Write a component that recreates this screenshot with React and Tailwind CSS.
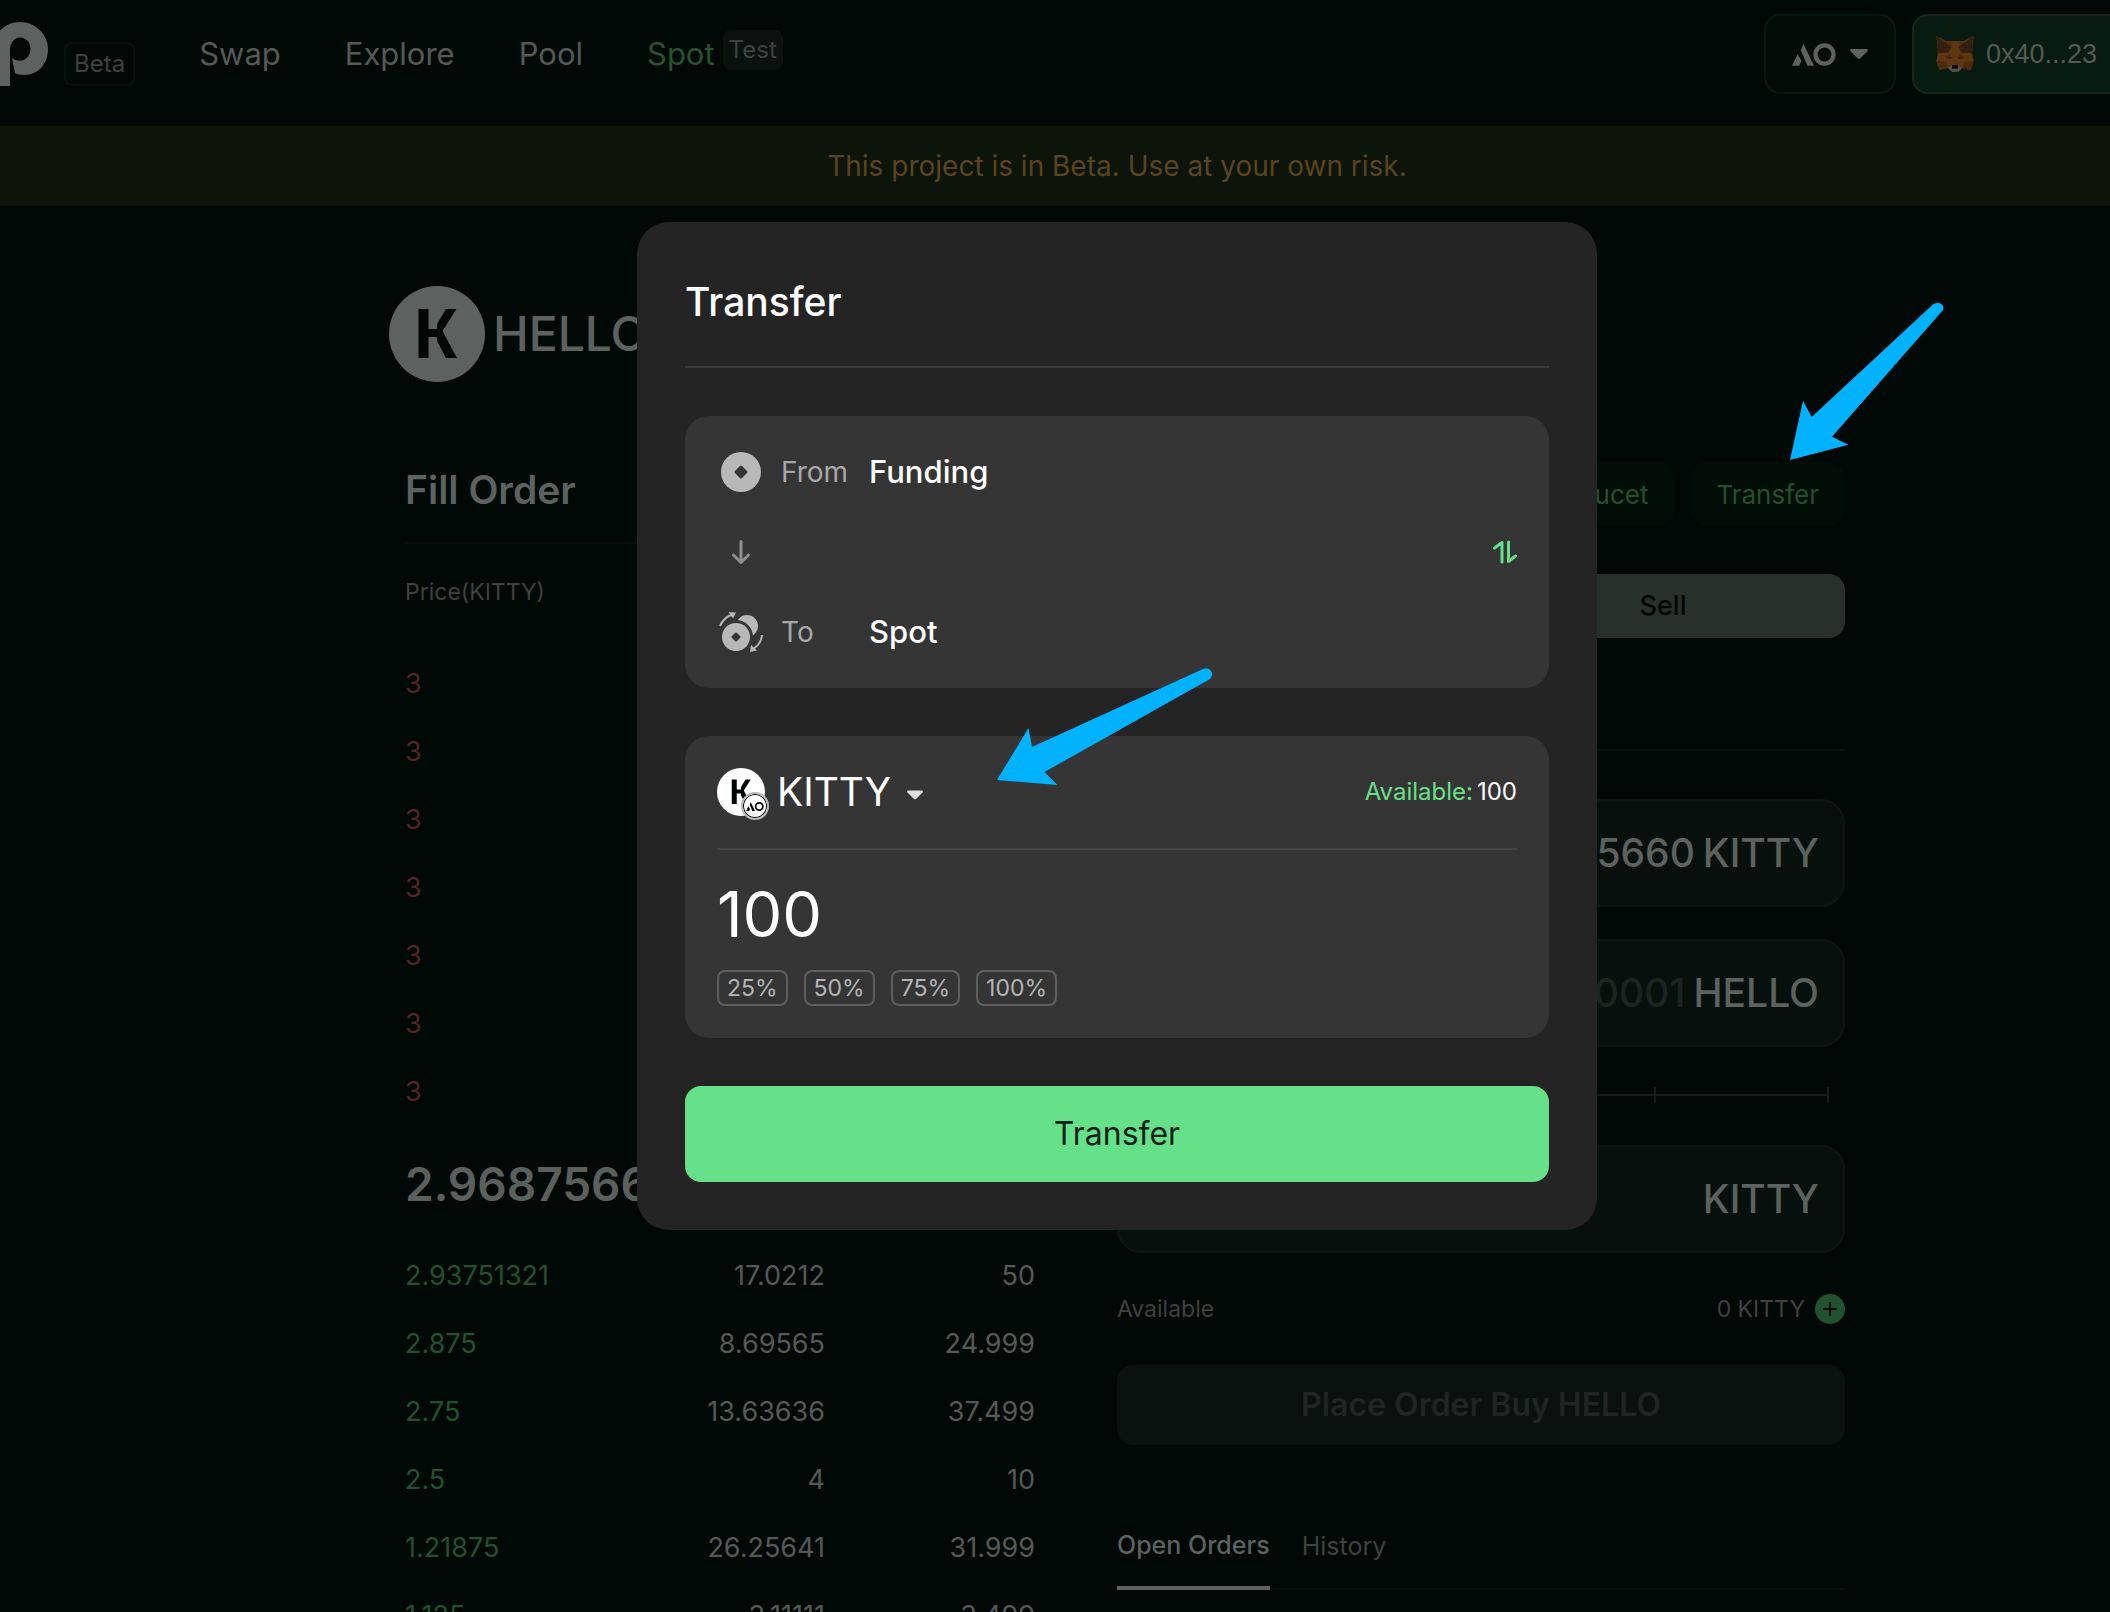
import React, { useState } from "react";

const asks = ["3", "3", "3", "3", "3", "3", "3"];
const bids = [
  ["2.93751321", "17.0212", "50"],
  ["2.875", "8.69565", "24.999"],
  ["2.75", "13.63636", "37.499"],
  ["2.5", "4", "10"],
  ["1.21875", "26.25641", "31.999"],
  ["1.125", "3.11111", "3.499"],
];

function AoMark({ className }) {
  return (
    <svg className={className} viewBox="0 0 134 68" fill="currentColor" aria-hidden="true">
      <path d="M0 68 L17 33 L29 53 L22 68 Z" />
      <path d="M35 1 L67 68 H47 L27 21 Z" />
      <path
        fillRule="evenodd"
        d="M99 0a34 34 0 1 1 0 68a34 34 0 1 1 0-68Zm0 13a21 21 0 1 0 0 42a21 21 0 1 0 0-42Z"
      />
    </svg>
  );
}

function Caret({ className }) {
  return (
    <svg className={className} viewBox="0 0 18 10" fill="currentColor" aria-hidden="true">
      <path d="M1.5 0h15c1.3 0 1.9 1.4 1 2.3l-6.8 6.6a2.4 2.4 0 0 1-3.4 0L.5 2.3C-.4 1.4.2 0 1.5 0Z" />
    </svg>
  );
}

function KMark({ className }) {
  return (
    <svg className={className} viewBox="0 0 96 96" aria-hidden="true">
      <circle cx="48" cy="48" r="48" fill="currentColor" />
      <path
        className="fill-[#000906]"
        d="M29.500 23H39.500V43H48V38L57 23H67.500L53.500 45L68 72H57L48 55V51H39.500V72H29.500Z"
      />
    </svg>
  );
}

function Fox() {
  return (
    <svg className="h-9 w-[38px]" viewBox="0 0 112 108" aria-hidden="true">
      <path fill="#5e3610" d="M28 15H84L112 0L106 48L112 75L103 102L78 96L64 107H48L34 96L9 102L0 75L6 48L0 0Z" />
      <path fill="#33200f" d="M0 0L46 32L36 50L4 52L0 30L6 28Z" />
      <path fill="#33200f" d="M112 0L66 32L76 50L108 52L112 30L106 28Z" />
      <path fill="#54300f" d="M5 0L28 15H46V32Z" />
      <path fill="#54300f" d="M107 0L84 15H66V32Z" />
      <path fill="#4b2a0e" d="M0 75L30 78L34 96L9 102Z" />
      <path fill="#4b2a0e" d="M112 75L82 78L78 96L103 102Z" />
      <path fill="#4a2712" d="M28 62L42 55L47 68L34 70Z" />
      <path fill="#4a2712" d="M84 62L70 55L65 68L78 70Z" />
      <path fill="#161616" d="M38 65L46 64L44 69Z" />
      <path fill="#161616" d="M74 65L66 64L68 69Z" />
      <path fill="#55504b" d="M34 95L48 88H64L78 95L66 107H46Z" />
      <path fill="#0c0d0c" d="M47 87H65V98H47Z" />
    </svg>
  );
}

function CoinIcon() {
  return (
    <svg className="size-10" viewBox="0 0 40 40" aria-hidden="true">
      <circle cx="20" cy="20" r="20" fill="#b8b8b8" />
      <rect x="15" y="15" width="10" height="10" rx="1.5" transform="rotate(45 20 20)" fill="#353535" />
    </svg>
  );
}

function CoinsIcon() {
  return (
    <svg className="h-10 w-11" viewBox="0 0 44 40" fill="none" aria-hidden="true">
      <circle cx="28" cy="14" r="11" fill="#b8b8b8" />
      <circle cx="17" cy="25" r="17" fill="#353535" />
      <circle cx="17" cy="25" r="14" fill="#b8b8b8" />
      <rect x="13.500" y="21.500" width="7" height="7" rx="1" transform="rotate(45 17 25)" fill="#353535" />
      <path d="M1 14C3 9 7 5 13 2.500" stroke="#b8b8b8" strokeWidth="2" />
      <path d="M9.500 0L17 0.500L14 6.500Z" fill="#b8b8b8" />
      <path d="M43 23C42.500 29 40 33 35 36.500" stroke="#b8b8b8" strokeWidth="2" />
      <path d="M32 33L31 40L38 38.500Z" fill="#b8b8b8" />
    </svg>
  );
}

function Field({ id, label, unit, value, placeholder }) {
  return (
    <div className="flex h-[108px] items-center gap-2 rounded-3xl border-2 border-[#0d1612] bg-[#07100c] px-6 text-[39px] font-medium">
      <label htmlFor={id} className="text-[23px] font-normal text-[#3c423f]">
        {label}
      </label>
      <input
        id={id}
        defaultValue={value}
        placeholder={placeholder}
        className="min-w-0 flex-1 bg-transparent text-right outline-none placeholder:text-[#1c2420]"
      />
      <span>{unit}</span>
    </div>
  );
}

function Header() {
  return (
    <header className="flex h-[126px] items-start justify-between pr-[104px]">
      <div className="flex items-start">
        <a href="#home" aria-label="Home" className="mt-[22px]">
          <svg className="h-16 w-12" viewBox="0 22 48 64" fill="currentColor" aria-hidden="true">
            <path d="M10 86H-8V49A28 27 0 0 1 20 22A28 27 0 0 1 48 49C48 64 38 75 24 75C20 75 17 74 15 73L12 58C14 60 17 60.500 20 60.500A10.500 11.500 0 0 0 20 37.500A10.500 11.500 0 0 0 10 49Z" />
          </svg>
        </a>
        <span className="mt-[42px] ml-4 flex h-11 items-center rounded-lg border-2 border-[#06150d] px-2 text-2xl text-[#3c423f]">
          Beta
        </span>
        <nav className="ml-16 flex h-[108px] items-center gap-16 text-[31px] text-[#555956]">
          <a href="#swap">Swap</a>
          <a href="#explore">Explore</a>
          <a href="#pool">Pool</a>
          <a href="#spot" className="flex items-center gap-2 text-[#275231]">
            Spot
            <span className="mb-2 flex h-10 items-center rounded-lg bg-[#0a120f] px-1.5 text-2xl text-[#3c423f]">
              Test
            </span>
          </a>
        </nav>
      </div>
      <div className="mt-[14px] flex gap-4">
        <button
          type="button"
          aria-label="Network"
          className="flex h-20 w-[132px] items-center justify-center gap-[14px] rounded-2xl border-2 border-[#081a10] bg-[#010e07]"
        >
          <AoMark className="h-[23px] w-11" />
          <Caret className="h-[10px] w-[18px]" />
        </button>
        <button
          type="button"
          className="flex h-20 w-[218px] items-center gap-3 rounded-2xl border-2 border-[#12291b] bg-[#081b10] pl-[22px] font-['Liberation_Sans',sans-serif] text-[27px] text-[#525a55]"
        >
          <Fox />
          0x40...23
        </button>
      </div>
    </header>
  );
}

function OrderBook() {
  return (
    <section className="flex-1 pr-[82px] pl-4">
      <div className="border-b-2 border-[#060f0b] pb-6">
        <h2 className="h-14 text-[39px] leading-[56px] font-semibold">Fill Order</h2>
      </div>
      <table className="w-full table-fixed text-[27px] text-[#555956]">
        <thead>
          <tr className="h-[106px] text-[23px] text-[#3c423f]">
            <th className="pb-[10px] text-left font-normal">Price(KITTY)</th>
            <td />
            <td />
          </tr>
        </thead>
        <tbody>
          {asks.map((price, i) => (
            <tr key={i} className="h-[68px]">
              <td className="text-[#552226]">{price}</td>
              <td />
              <td />
            </tr>
          ))}
          <tr className="h-[116px] text-[46px] font-semibold text-[#5b605d]">
            <td colSpan={3}>2.96875660</td>
          </tr>
          {bids.map(([price, amount, total]) => (
            <tr key={price} className="h-[68px]">
              <td className="text-[#225130]">{price}</td>
              <td className="text-right">{amount}</td>
              <td className="text-right">{total}</td>
            </tr>
          ))}
        </tbody>
      </table>
    </section>
  );
}

function OrderForm() {
  return (
    <section className="w-1/2">
      <div className="flex justify-end gap-4 text-[26px] text-[#225130]">
        <button type="button" className="h-16 rounded-2xl bg-[#010e07] px-[26px]">
          Faucet
        </button>
        <button type="button" className="h-16 rounded-2xl bg-[#010e07] px-[26px]">
          Transfer
        </button>
      </div>
      <div className="mt-12 grid grid-cols-2 text-[27px] font-medium text-[#020504]">
        <button type="button" className="h-16 rounded-l-2xl bg-[#27593a]">
          Buy
        </button>
        <button type="button" className="h-16 rounded-r-2xl bg-[#28302c]">
          Sell
        </button>
      </div>
      <hr className="mt-[111px] border-t-2 border-[#08110d]" />
      <div className="mt-12 flex flex-col gap-8">
        <Field id="price" label="Price" unit="KITTY" value="2.96875660" />
        <Field id="amount" label="Amount" unit="HELLO" placeholder="0.0001" />
      </div>
      <div className="relative mx-4 mt-10 flex h-4 items-center justify-between text-[#161d1a]">
        <span className="absolute inset-x-0 h-0.5 bg-current" />
        {[0, 25, 50, 75, 100].map((step) => (
          <span key={step} className="h-4 w-0.5 bg-current" />
        ))}
        <input
          type="range"
          aria-label="Amount percentage"
          defaultValue={0}
          className="absolute inset-0 w-full appearance-none bg-transparent opacity-0"
        />
      </div>
      <div className="mt-[42px]">
        <Field id="total" label="Total" unit="KITTY" />
      </div>
      <div className="mt-10 flex h-8 items-center justify-between text-[23px] text-[#3c423f]">
        <span>Available</span>
        <span className="flex items-center gap-2.5">
          0 KITTY
          <button
            type="button"
            aria-label="Add funds"
            className="flex size-[30px] items-center justify-center rounded-full bg-[#225130] text-[#000906]"
          >
            <svg className="size-[14px]" viewBox="0 0 14 14" stroke="currentColor" strokeWidth="2">
              <path d="M7 0V14M0 7H14" />
            </svg>
          </button>
        </span>
      </div>
      <button
        type="button"
        disabled
        className="mt-10 h-20 w-full rounded-2xl bg-[#0a120f] text-[32px] font-semibold text-[#1f2623]"
      >
        Place Order Buy HELLO
      </button>
      <div className="mt-20 flex gap-8 border-b-2 border-[#060f0b] text-[25px] leading-10">
        <button type="button" className="-mb-0.5 border-b-4 border-[#5c625f] pb-[21px] font-medium">
          Open Orders
        </button>
        <button type="button" className="pb-[21px] text-[#3c423f]">
          History
        </button>
      </div>
    </section>
  );
}

function TransferDialog() {
  const [amount, setAmount] = useState("100");
  return (
    <div
      role="dialog"
      aria-labelledby="transfer-title"
      className="w-[960px] rounded-[32px] bg-[#242424] p-12 pt-0 text-white"
    >
      <h2 id="transfer-title" className="flex h-36 items-center pt-4 text-[39px] font-medium">
        Transfer
      </h2>
      <hr className="border-t-2 border-[#3a3a3a]" />
      <div className="mt-12 flex h-[272px] flex-col justify-between rounded-3xl bg-[#353535] px-8 py-8 text-[31px]">
        <div className="flex h-12 items-center">
          <span className="flex w-12 justify-center">
            <CoinIcon />
          </span>
          <span className="ml-4 w-[88px] text-[28px] text-[#a8a8a8]">From</span>
          <span className="font-medium">Funding</span>
        </div>
        <div className="flex items-center justify-between">
          <span className="flex w-12 justify-center">
            <svg
              className="h-6 w-5"
              viewBox="0 0 20 24"
              fill="none"
              stroke="#909090"
              strokeWidth="3"
              strokeLinecap="round"
              strokeLinejoin="round"
              aria-hidden="true"
            >
              <path d="M10 1.500V22M2.500 15L10 22.500L17.500 15" />
            </svg>
          </span>
          <button type="button" aria-label="Swap direction">
            <svg
              className="size-6"
              viewBox="0 0 24 24"
              fill="none"
              stroke="#66e18a"
              strokeWidth="3"
              strokeLinecap="round"
              strokeLinejoin="round"
            >
              <path d="M1.500 8L9 2.500V22M15.500 2V21.500L22.500 16" />
            </svg>
          </button>
        </div>
        <div className="flex h-12 items-center">
          <span className="flex w-12 justify-center">
            <CoinsIcon />
          </span>
          <span className="ml-4 w-[88px] text-[28px] text-[#a8a8a8]">To</span>
          <span className="font-medium">Spot</span>
        </div>
      </div>
      <div className="mt-12 rounded-3xl bg-[#353535] p-8">
        <div className="flex h-12 items-center justify-between">
          <button type="button" className="flex items-center text-[39px] leading-[48px]">
            <span className="relative size-12">
              <KMark className="size-12" />
              <span className="absolute -right-1 -bottom-1 flex size-7 items-center justify-center rounded-full border-2 border-[#b8b8b8] bg-white ring-1 ring-black ring-inset">
                <AoMark className="h-[9px] w-[18px] shrink-0 text-black" />
              </span>
            </span>
            <span className="ml-3">KITTY</span>
            <Caret className="mt-1.5 ml-4 h-[10px] w-4 text-[#e0e0e0]" />
          </button>
          <span className="flex gap-1 text-2xl">
            <span className="text-[#66e18a]">Available:</span>
            <span>100</span>
          </span>
        </div>
        <hr className="mt-8 border-t-2 border-[#444444]" />
        <input
          aria-label="Transfer amount"
          value={amount}
          onChange={(e) => setAmount(e.target.value)}
          className="mt-6 block h-20 w-full bg-transparent text-[63px] outline-none"
        />
        <div className="mt-4 flex gap-4 text-[23px] text-[#b4b4b4]">
          {["25%", "50%", "75%", "100%"].map((pct) => (
            <button
              key={pct}
              type="button"
              className="flex h-9 items-center rounded-lg border-2 border-[#5f5f5f] px-2"
            >
              {pct}
            </button>
          ))}
        </div>
      </div>
      <button
        type="button"
        className="mt-12 block h-24 w-full rounded-2xl bg-[#66e18a] text-[32px] text-[#10201a]"
      >
        Transfer
      </button>
    </div>
  );
}

export default function App() {
  return (
    <div className="relative h-screen overflow-hidden bg-[#000906] font-[Inter,sans-serif] text-[#5c625f]">
      <div className="-mr-[124px]">
        <Header />
        <p className="h-20 bg-[#0d140a] text-center text-[28px] leading-[80px] text-[#5a441d]">
          This project is in Beta. Use at your own risk.
        </p>
        <main className="mx-auto w-[1456px] pt-20">
          <h1 className="flex items-center gap-2 text-5xl font-medium">
            <KMark className="size-24" />
            HELLO
          </h1>
          <div className="mt-20 flex">
            <OrderBook />
            <OrderForm />
          </div>
        </main>
      </div>
      <div className="absolute inset-y-0 left-0 -right-[124px] flex items-start justify-center pt-[222px]">
        <TransferDialog />
      </div>
      <svg
        className="pointer-events-none absolute top-[303px] left-[1790px] h-[157px] w-[154px]"
        viewBox="150 69 462 471"
        fill="#00b2ff"
        aria-hidden="true"
      >
        <path d="M150 540L189 362L215 411L577 75C592 62 616 72 609 90L276 470L325 494Z" />
      </svg>
      <svg
        className="pointer-events-none absolute top-[668px] left-[997px] h-[118px] w-[216px]"
        viewBox="0 0 216 118"
        fill="#00b2ff"
        aria-hidden="true"
      >
        <path d="M0 112L31.500 60L35 79L206 1C213 -2 218 6 213 11L47.500 104L60.500 117Z" />
      </svg>
    </div>
  );
}
